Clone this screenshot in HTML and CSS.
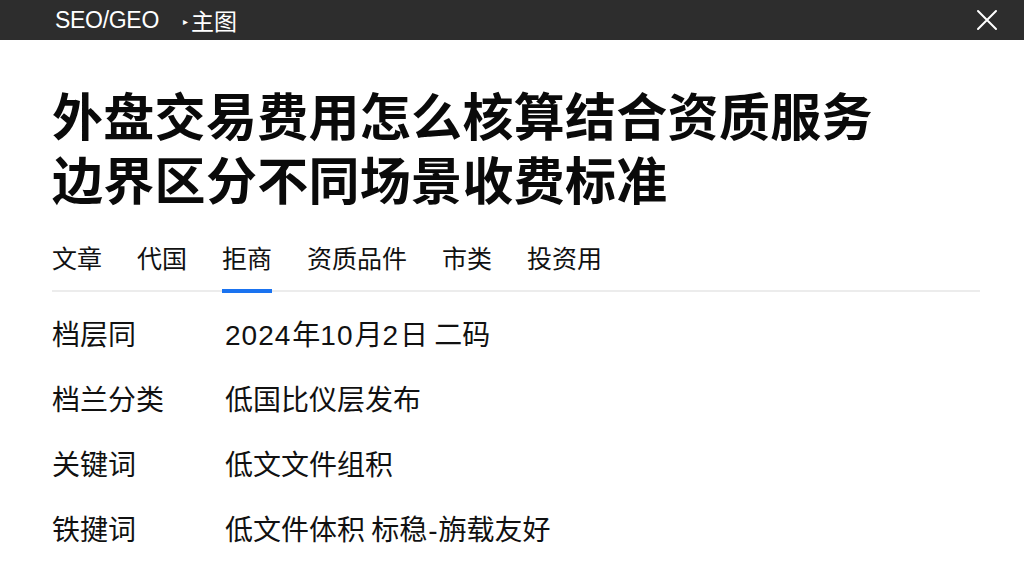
FILE: index.html
```html
<!DOCTYPE html>
<html lang="zh-CN">
<head>
<meta charset="utf-8">
<title>SEO/GEO</title>
<link rel="stylesheet" href="styles.css">
</head>
<body>
<header class="topbar">
  <div class="brand">SEO/GEO</div>
  <div class="crumb"><span class="tri">▸</span>主图</div>
  <svg class="close" width="22" height="22" viewBox="0 0 22 22"><path d="M2 2 L20 20 M20 2 L2 20" stroke="#ffffff" stroke-width="2" fill="none" stroke-linecap="round"/></svg>
</header>
<main class="content">
  <h1 class="title"><span class="line">外盘交易费用怎么核算结合资质服务</span><span class="line">边界区分不同场景收费标准</span></h1>
  <nav class="tabs">
    <span class="tab">文章</span>
    <span class="tab">代国</span>
    <span class="tab active">拒商</span>
    <span class="tab">资质品件</span>
    <span class="tab">市类</span>
    <span class="tab">投资用</span>
  </nav>
  <dl class="meta">
    <dt>档层同</dt><dd><span class="num">2024</span>年<span class="num">10</span>月<span class="num">2</span>日 二码</dd>
    <dt>档兰分类</dt><dd>低国比仪层发布</dd>
    <dt>关键词</dt><dd>低文文件组积</dd>
    <dt>铁揵词</dt><dd>低文件体积 标稳<span class="dash">-</span>旃载友好</dd>
  </dl>
</main>
</body>
</html>
```
FILE: styles.css
```css
html, body {
  margin: 0;
  padding: 0;
  background: #ffffff;
  font-family: "Noto Sans CJK SC", "Noto Sans", sans-serif;
  color: #111111;
}
.topbar {
  height: 40px;
  background: #2d2d2d;
  display: flex;
  align-items: center;
  padding: 0 26px 0 55px;
  color: #ffffff;
}
.brand {
  font-family: "Liberation Sans", Arial, sans-serif;
  font-size: 23px;
  letter-spacing: -0.3px;
}
.crumb {
  margin-left: 24px;
  font-size: 23px;
  display: flex;
  align-items: center;
}
.tri {
  font-size: 10px;
  margin-right: 3px;
}
.close {
  margin-left: auto;
}
.content {
  padding: 0 44px 0 52px;
}
.title {
  margin: 42px 0 0 0;
  font-size: 51px;
  line-height: 64px;
  font-weight: 700;
  color: #0a0a0a;
  letter-spacing: 0.3px;
}
.line {
  display: block;
  height: 64px;
}
.tabs {
  margin-top: 31px;
  display: flex;
  gap: 35px;
  border-bottom: 2px solid #ececec;
}
.tab {
  font-size: 25px;
  line-height: 32px;
  padding-bottom: 16px;
  border-bottom: 4px solid transparent;
  margin-bottom: -3px;
  color: #111;
}
.tab.active {
  border-bottom-color: #1a73f0;
}
.meta {
  margin: 25px 0 0 0;
  display: grid;
  grid-template-columns: 173px auto;
  grid-auto-rows: 32px;
  row-gap: 33px;
  font-size: 28px;
  line-height: 32px;
}
.meta dt, .meta dd {
  margin: 0;
  white-space: nowrap;
}
.num {
  font-family: "Liberation Sans", Arial, sans-serif;
  letter-spacing: 1px;
  margin-right: 1px;
  line-height: 1;
}
.dash {
  font-family: "Liberation Sans", Arial, sans-serif;
  margin: 0 1px;
  line-height: 1;
}
```
